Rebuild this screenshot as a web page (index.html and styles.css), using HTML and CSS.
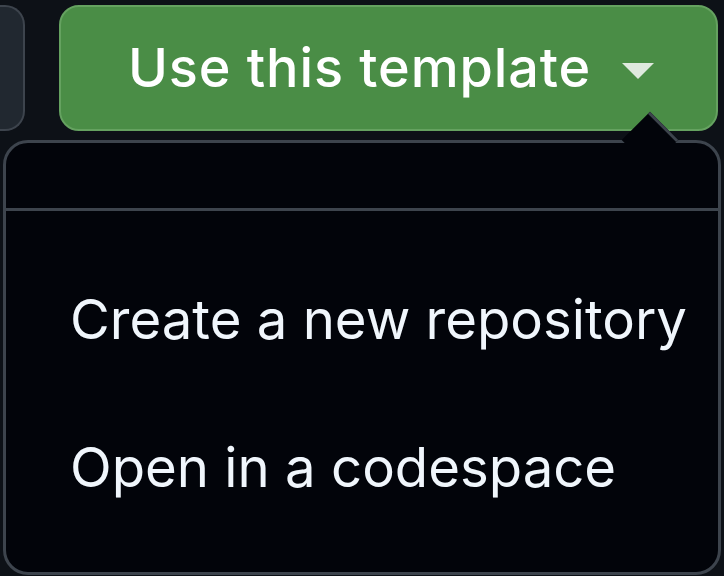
FILE: index.html
```html
<!DOCTYPE html>
<html lang="en">
<head>
<meta charset="utf-8">
<link rel="stylesheet" href="styles.css">
</head>
<body>
<div class="bar">
  <div class="btn-side"></div>
  <div class="btn-primary">
    <span class="btn-label">Use this template</span>
    <svg class="caret" width="32" height="16" viewBox="0 0 32 16"><path d="M0 0 H32 L16 16 Z" fill="#dfe9de"/></svg>
  </div>
</div>
<div class="menu">
  <div class="arrow"></div>
  <div class="menu-header"></div>
  <ul class="menu-list">
    <li class="menu-item">Create a new repository</li>
    <li class="menu-item">Open in a codespace</li>
  </ul>
</div>
</body>
</html>
```
FILE: styles.css
```css
html, body {
  margin: 0;
  padding: 0;
  background: #0d1117;
  width: 724px;
  height: 576px;
  overflow: hidden;
  font-family: Inter, "Noto Sans", sans-serif;
}
.bar {
  display: flex;
  gap: 34px;
  padding-top: 5px;
  height: 126px;
}
.btn-side {
  width: 25px;
  box-sizing: border-box;
  height: 126px;
  background: #212830;
  border: 2px solid #3d444d;
  border-left: none;
  border-radius: 0 20px 20px 0;
}
.btn-primary {
  width: 659px;
  height: 126px;
  box-sizing: border-box;
  background: #4a8d46;
  border: 2px solid #65a260;
  border-radius: 20px;
  display: flex;
  align-items: center;
  padding-left: 67px;
  gap: 31px;
}
.btn-label {
  color: #ffffff;
  font-size: 54px;
  font-weight: 500;
  letter-spacing: 0.9px;
  line-height: 1;
}
.caret {
  display: block;
  margin-top: 6px;
}
.menu {
  position: absolute;
  left: 3px;
  top: 140px;
  width: 718px;
  height: 435px;
  box-sizing: border-box;
  background: #02040a;
  border: 3px solid #3d444d;
  border-radius: 25px;
}
.arrow {
  position: absolute;
  left: 624px;
  top: -23px;
  width: 40px;
  height: 40px;
  box-sizing: border-box;
  background: #02040a;
  border-top: 3px solid #3d444d;
  transform: rotate(45deg);
}
.menu-header {
  height: 65px;
  border-bottom: 3px solid #3d444d;
}
.menu-list {
  list-style: none;
  margin: 0;
  padding: 34px 0 0 0;
}
.menu-item {
  color: #f0f6fc;
  font-size: 54.5px;
  line-height: 148px;
  height: 148px;
  padding-left: 64px;
  white-space: nowrap;
}
```
